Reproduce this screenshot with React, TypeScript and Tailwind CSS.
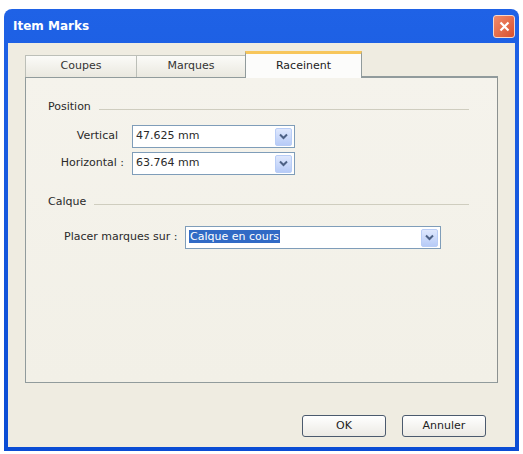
const font = { fontFamily: '"DejaVu Sans", Tahoma, sans-serif' };

function Chevron() {
  return (
    <svg width="9" height="7" viewBox="0 0 9 7" className="block">
      <path d="M1 1.5 L4.5 5 L8 1.5" fill="none" stroke="#4d6185" strokeWidth="2" />
    </svg>
  );
}

function Combo({ value, width, selected }: { value: string; width: string; selected?: boolean }) {
  return (
    <div className={`${width} flex h-[23px] items-center border border-[#7f9db9] bg-white pl-[3px] pr-[2px]`}>
      <div className="flex-1 text-[11px] text-[#2a2a2a]">
        {selected ? <span className="bg-[#316ac5] px-[1px] text-white">{value}</span> : value}
      </div>
      <div className="flex h-[18px] w-[17px] items-center justify-center rounded-[2px] border border-[#b9cdf6] bg-gradient-to-b from-[#dfe8fd] to-[#b7cbf7]">
        <Chevron />
      </div>
    </div>
  );
}

function GroupHeader({ label }: { label: string }) {
  return (
    <div className="flex h-[16px] items-center pr-[28px]">
      <span className="text-[11px] text-[#2a2a2a]">{label}</span>
      <div className="ml-[8px] mt-[4px] h-px flex-1 bg-[#cfcdbf]" />
    </div>
  );
}

function Tab({ label, width, active }: { label: string; width: string; active?: boolean }) {
  if (active)
    return (
      <div className={`${width} relative -mb-px flex h-[27px] items-center justify-center border-x border-t-[3px] border-x-[#919b9c] border-t-[#f7c65b] bg-[#fcfcfb] text-[11px] text-[#222]`}>
        {label}
      </div>
    );
  return (
    <div className={`${width} mt-[4px] flex h-[22px] items-center justify-center border-l border-t border-[#bcbfb8] bg-gradient-to-b from-[#fbfbf8] to-[#eae8df] text-[11px] text-[#333]`}>
      {label}
    </div>
  );
}

function Button({ label }: { label: string }) {
  return (
    <div className="flex h-[22px] w-[84px] items-center justify-center rounded-[3px] border border-[#4b5a6e] bg-gradient-to-b from-white to-[#eceae4] text-[11px] text-[#222]">
      {label}
    </div>
  );
}

export default function App() {
  return (
    <div className="h-[454px] bg-white pl-[4px] pt-[9px]" style={font}>
      <div className="flex h-[442px] w-[515px] flex-col rounded-t-[8px] bg-gradient-to-b from-[#1f62e6] to-[#0a4cd4]">
        <div className="flex h-[34px] items-center justify-between pl-[9px] pr-[4px]">
          <span className="text-[12px] font-bold text-white">Item Marks</span>
          <div className="flex h-[23px] w-[22px] items-center justify-center rounded-[3px] border border-[#f5d7cc] bg-gradient-to-br from-[#f08a6a] to-[#d9502d]">
            <svg width="11" height="11" viewBox="0 0 11 11">
              <path d="M1.5 1.5 L9.5 9.5 M9.5 1.5 L1.5 9.5" stroke="white" strokeWidth="2.2" />
            </svg>
          </div>
        </div>
        <div className="mx-[4px] mb-[4px] flex flex-1 flex-col bg-[#efece1] px-[17px] pt-[8px]">
          <div className="flex h-[26px] items-start">
            <Tab label="Coupes" width="w-[111px]" />
            <Tab label="Marques" width="w-[109px]" />
            <Tab label="Raceinent" width="w-[117px]" active />
            <div className="flex-1 self-end border-b border-[#919b9c]" />
          </div>
          <div className="flex h-[306px] flex-col border border-[#919b9c] border-r-[#8c9190] bg-gradient-to-b from-[#f5f3ec] to-[#f2f0e7] pl-[22px] pt-[21px]">
            <GroupHeader label="Position" />
            <div className="mt-[10px] flex items-center">
              <span className="w-[76px] pr-[6px] text-right text-[11px] text-[#2a2a2a]">Vertical</span>
              <div className="ml-[8px]">
                <Combo value="47.625 mm" width="w-[163px]" />
              </div>
            </div>
            <div className="mt-[4px] flex items-center">
              <span className="w-[76px] text-right text-[11px] text-[#2a2a2a]">Horizontal :</span>
              <div className="ml-[8px]">
                <Combo value="63.764 mm" width="w-[163px]" />
              </div>
            </div>
            <div className="mt-[19px]">
              <GroupHeader label="Calque" />
            </div>
            <div className="mt-[16px] flex items-center">
              <span className="ml-[16px] w-[121px] text-[11px] text-[#2a2a2a]">Placer marques sur :</span>
              <Combo value="Calque en cours" width="w-[256px]" selected />
            </div>
          </div>
          <div className="mt-[32px] flex justify-end gap-[16px] pr-[12px]">
            <Button label="OK" />
            <Button label="Annuler" />
          </div>
        </div>
      </div>
    </div>
  );
}
